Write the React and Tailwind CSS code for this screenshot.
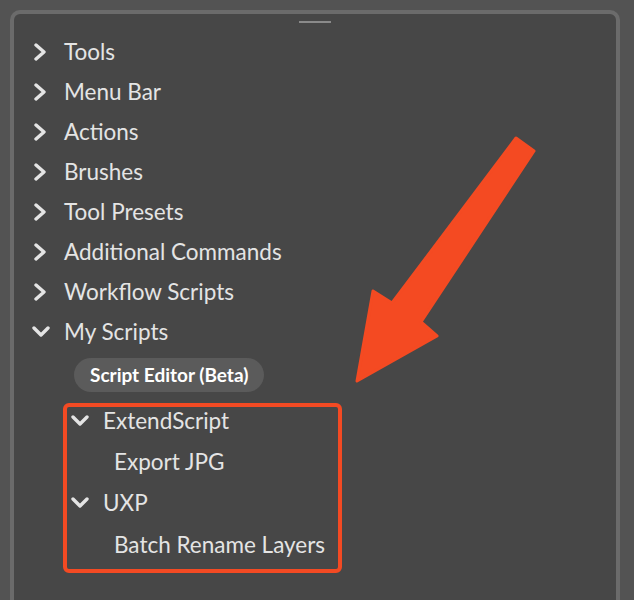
const topItems = [
  'Tools',
  'Menu Bar',
  'Actions',
  'Brushes',
  'Tool Presets',
  'Additional Commands',
  'Workflow Scripts'
]

const font = { fontFamily: 'Lato, "Liberation Sans", sans-serif' }

function Chevron({ open }) {
  if (open) {
    return (
      <svg width="18" height="12" viewBox="0 0 18 12" className="text-[#e4e4e4]">
        <polyline points="2,2 9,9 16,2" fill="none" stroke="currentColor" strokeWidth="3.4" strokeLinecap="round" strokeLinejoin="round" />
      </svg>
    )
  }
  return (
    <svg width="14" height="18" viewBox="0 0 14 18" className="text-[#e4e4e4]">
      <polyline points="2,2 10,9 2,16" fill="none" stroke="currentColor" strokeWidth="3.4" strokeLinecap="round" strokeLinejoin="round" />
    </svg>
  )
}

function Row({ label, open }) {
  return (
    <div className={`flex items-center h-10 ${open ? 'pl-[18px]' : 'pl-[20px]'}`}>
      <div className={`${open ? 'w-[32px]' : 'w-[30px]'} flex items-center`}>
        <Chevron open={open} />
      </div>
      <span className="text-[22.5px] text-[#e4e4e4]">{label}</span>
    </div>
  )
}

export default function App() {
  return (
    <div className="relative w-[634px] h-[600px] overflow-hidden bg-[#535353] pt-[10px] pl-[10px] pr-[14px]" style={font}>
      <div className="h-[600px] rounded-t-[10px] border-[4px] border-b-0 border-[#6b6b6b] bg-[#474747]">
        {/* drag handle */}
        <div className="flex justify-center pt-[7px]">
          <div className="w-[32px] h-[2px] bg-[#8a8a8a]" />
        </div>

        <div className="pt-[9px]">
          {topItems.map((item) => (
            <Row key={item} label={item} />
          ))}
          <Row label="My Scripts" open />
        </div>

        <div className="pl-[60px] mt-[6px]">
          <span className="inline-flex items-center h-[34px] px-[16px] rounded-full bg-[#5b5b5b] text-[19px] font-bold text-white">
            Script Editor (Beta)
          </span>
        </div>

        <div className="ml-[49px] mt-[11px] w-[279px] h-[170px] rounded-[6px] border-[4px] border-[#f34a23]">
          <div className="-mt-[7px]">
            <div className="flex items-center h-[41px] pl-[4px]">
              <Chevron open />
              <span className="ml-[14px] text-[22.5px] text-[#e4e4e4]">ExtendScript</span>
            </div>
            <div className="flex items-center h-[41px] pl-[47px]">
              <span className="text-[22.5px] text-[#e4e4e4]">Export JPG</span>
            </div>
            <div className="flex items-center h-[42px] pl-[4px]">
              <Chevron open />
              <span className="ml-[14px] text-[22.5px] text-[#e4e4e4]">UXP</span>
            </div>
            <div className="flex items-center h-[42px] pl-[47px]">
              <span className="text-[22.5px] text-[#e4e4e4]">Batch Rename Layers</span>
            </div>
          </div>
        </div>
      </div>

      {/* annotation arrow */}
      <svg className="absolute inset-0 pointer-events-none" width="634" height="600">
        <polygon
          points="516,138 534,151 421,322 437,336 357,381 373,291 392,303"
          fill="#f44a22"
          stroke="#f44a22"
          strokeWidth="3"
          strokeLinejoin="round"
        />
      </svg>
    </div>
  )
}
